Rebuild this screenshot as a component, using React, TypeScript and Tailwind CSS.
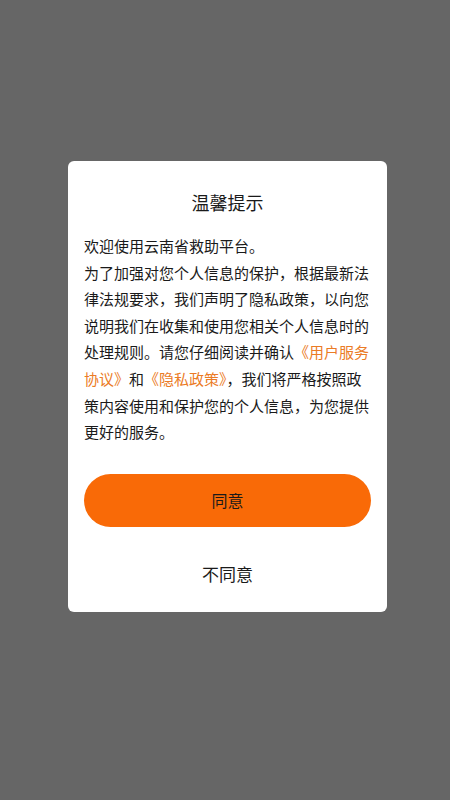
export default function App() {
  return (
    <div
      className="w-[450px] h-[800px] bg-[#666666] flex items-start pl-[68px] pt-[161px]"
      style={{ fontFamily: '"Noto Sans CJK SC", "Noto Sans", sans-serif' }}
    >
      <div className="w-[319px] bg-white rounded-[6px] px-4 pt-[29px] pb-[13px] flex flex-col">
        <h2 className="text-center text-[18px] leading-[24px] text-[#1a1a1a]">温馨提示</h2>

        <p className="mt-[19px] text-[15px] leading-[26.6px] text-[#1a1a1a]">
          欢迎使用云南省救助平台。
          <br />
          为了加强对您个人信息的保护，根据最新法律法规要求，我们声明了隐私政策，以向您说明我们在收集和使用您相关个人信息时的处理规则。请您仔细阅读并确认
          <span className="text-[#eb7b25]">《用户服务协议》</span>和
          <span className="text-[#eb7b25]">《隐私政策》</span>
          ，我们将严格按照政策内容使用和保护您的个人信息，为您提供更好的服务。
        </p>

        <button className="mt-[28px] h-[53px] w-full rounded-full bg-[#f96a07] text-[16px] text-[#1a1a1a]">
          同意
        </button>

        <button className="mt-[22px] h-[50px] w-full flex items-center justify-center text-[17px] text-[#1a1a1a]">
          不同意
        </button>
      </div>
    </div>
  );
}
